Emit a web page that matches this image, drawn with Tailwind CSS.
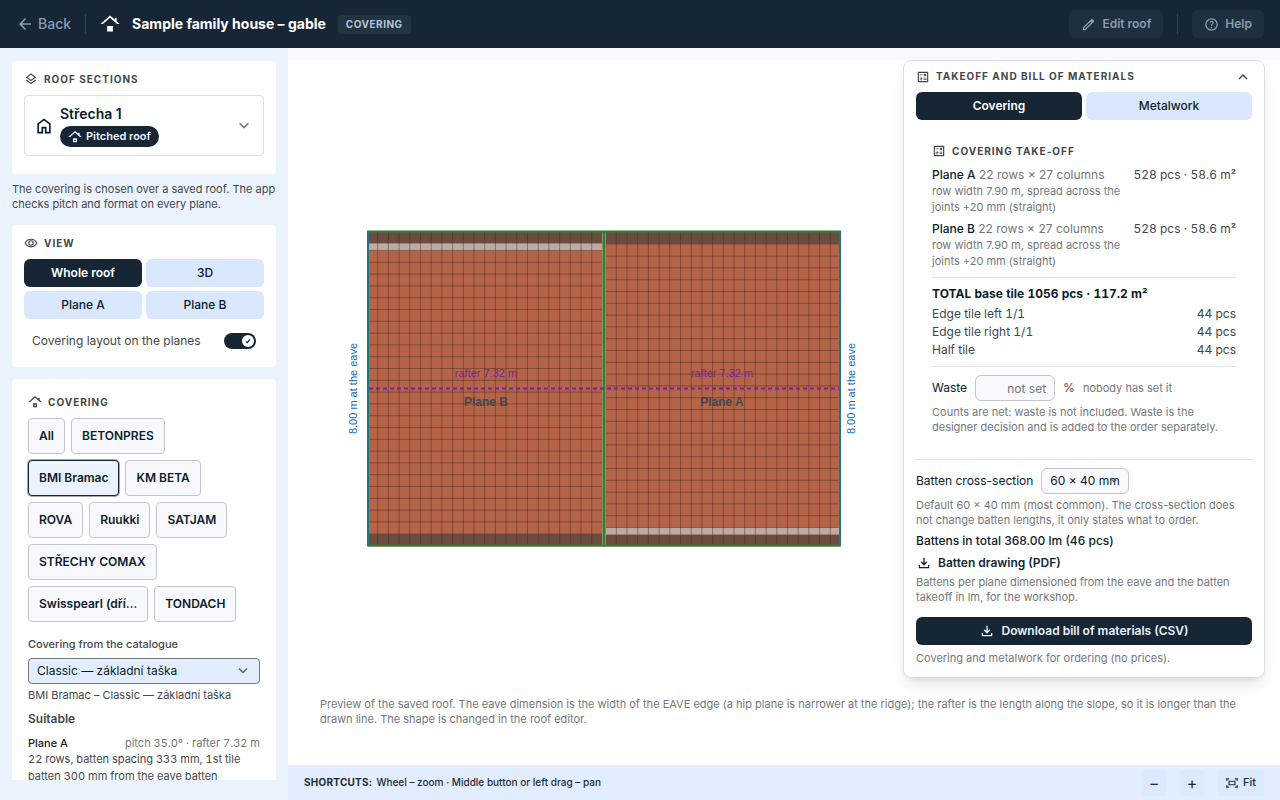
<!DOCTYPE html>
<html lang="en">
<head>
    <meta charset="UTF-8">
    <meta name="viewport" content="width=device-width, initial-scale=1.0">
    <title>Sample family house – gable</title>
    <script src="https://cdn.jsdelivr.net/npm/@tailwindcss/browser@4"></script>
</head>
<body class="h-screen flex flex-col overflow-hidden bg-[#f8f9ff] font-['Inter',sans-serif] text-xs text-[#43474c]">

    <!-- icon set -->
    <svg class="hidden">
        <symbol id="i-back" viewBox="0 -960 960 960"><path d="m313-440 224 224-57 56-320-320 320-320 57 56-224 224h487v80H313Z"/></symbol>
        <symbol id="i-roof" viewBox="1.500 1.500 21 21"><path d="M9 14h6v6H9zM19 9V5.500h-2v1.800L12 3 2 12h2.600L12 5.500 19.400 12H22z"/></symbol>
        <symbol id="i-roof-line" viewBox="1.500 1.500 21 21"><path d="M13 18h-2v-2h2zM15 14H9v6h6zM19 9V5.500h-2v1.800L12 3 2 12h2.600L12 5.500 19.400 12H22z"/></symbol>
        <symbol id="i-home" viewBox="0 -960 960 960"><path d="M240-200h120v-240h240v240h120v-360L480-740 240-560v360Zm-80 80v-480l320-240 320 240v480H520v-240h-80v240H160Z"/></symbol>
        <symbol id="i-down" viewBox="0 -960 960 960"><path d="M480-344 240-584l56-56 184 184 184-184 56 56-240 240Z"/></symbol>
        <symbol id="i-up" viewBox="0 -960 960 960"><path d="M480-528 296-344l-56-56 240-240 240 240-56 56-184-184Z"/></symbol>
        <symbol id="i-layers" viewBox="0 -960 960 960"><path d="M480-118 120-398l66-50 294 228 294-228 66 50-360 280Zm0-202L120-600l360-280 360 280-360 280Zm0-102 230-178-230-178-230 178 230 178Z"/></symbol>
        <symbol id="i-eye" viewBox="0 0 24 24"><path fill="none" stroke="currentColor" stroke-width="2" d="M2 12c2-4 5.500-6.500 10-6.500S20 8 22 12c-2 4-5.500 6.500-10 6.500S4 16 2 12z"/><circle cx="12" cy="12" r="3.800" fill="none" stroke="currentColor" stroke-width="2"/></symbol>
        <symbol id="i-calc" viewBox="0 0 24 24"><path fill="none" stroke="currentColor" stroke-width="2" d="M4 4h16v16H4z"/><path d="M6.300 7.700h5v1.500h-5zM13 15.700h5v1.500h-5zM13 13.200h5v1.500h-5zM8 18h1.500v-2h2v-1.500h-2v-2H8v2H6V16h2zM14.100 11l1.400-1.400 1.400 1.400 1.100-1.100-1.400-1.400L18 7.100 16.900 6l-1.400 1.400L14.100 6 13 7.100l1.400 1.400L13 9.900z"/></symbol>
        <symbol id="i-edit" viewBox="0 -960 960 960"><path d="M200-200h57l391-391-57-57-391 391v57Zm-80 80v-170l528-527q12-11 26.500-17t30.500-6q16 0 31 6t26 18l55 56q12 11 17.500 26t5.500 30q0 16-5.500 30.500T817-647L290-120H120Zm640-584-56-56 56 56Zm-141 85-28-29 57 57-29-28Z"/></symbol>
        <symbol id="i-help" viewBox="0 -960 960 960"><path d="M478-240q21 0 35.500-14.500T528-290q0-21-14.500-35.500T478-340q-21 0-35.500 14.500T428-290q0 21 14.500 35.500T478-240Zm-36-154h74q0-33 7.500-52t42.500-52q26-26 41-49.500t15-56.500q0-56-41-86t-97-30q-57 0-92.500 30T342-618l66 26q5-18 22.500-39t53.500-21q32 0 48 17.500t16 38.500q0 20-12 37.500T506-526q-44 39-54 59t-10 73Zm38 314q-83 0-156-31.500T197-197q-54-54-85.500-127T80-480q0-83 31.500-156T197-763q54-54 127-85.500T480-880q83 0 156 31.500T763-763q54 54 85.500 127T880-480q0 83-31.500 156T763-197q-54 54-127 85.500T480-80Zm0-80q134 0 227-93t93-227q0-134-93-227t-227-93q-134 0-227 93t-93 227q0 134 93 227t227 93Z"/></symbol>
        <symbol id="i-download" viewBox="0 -960 960 960"><path d="M480-320 280-520l56-58 104 104v-326h80v326l104-104 56 58-200 200ZM240-160q-33 0-56.500-23.500T160-240v-120h80v120h480v-120h80v120q0 33-23.500 56.500T720-160H240Z"/></symbol>
        <symbol id="i-fit" viewBox="0 0 24 24"><path fill="none" stroke="currentColor" stroke-width="2" d="M3 8V5h4M17 5h4v3M21 16v3h-4M7 19H3v-3M7 9h10v6H7z"/></symbol>
    </svg>

    <header class="h-12 shrink-0 flex items-center px-4 bg-[#162635] text-[#8a9caf]">
        <a href="#" class="flex items-center gap-1 text-sm font-medium"><svg class="size-[18px] fill-current"><use href="#i-back"/></svg>Back</a>
        <span class="w-px h-5 ml-3.5 bg-[#34424f]"></span>
        <svg class="size-5 ml-3.5 fill-white"><use href="#i-roof"/></svg>
        <h1 class="ml-3 text-sm font-bold text-white">Sample family house – gable</h1>
        <span class="ml-3 px-2 py-0.5 rounded-sm bg-[#233342] text-[10px] leading-[15px] font-bold tracking-wider text-[#b4c3d3]">COVERING</span>
        <div class="ml-auto flex items-center">
            <button class="h-7 px-3 flex items-center gap-1.5 rounded-md bg-[#1e2f3f] font-semibold"><svg class="size-[15px] fill-current"><use href="#i-edit"/></svg>Edit roof</button>
            <span class="w-px h-5 mx-3.5 bg-[#34424f]"></span>
            <button class="h-7 px-3 flex items-center gap-1.5 rounded-md bg-[#1e2f3f] font-semibold"><svg class="size-[15px] fill-current"><use href="#i-help"/></svg>Help</button>
        </div>
    </header>

    <div class="flex-1 min-h-0 flex">
        <aside class="w-72 shrink-0 bg-[#ebf3ff] px-3 pt-[13px] pb-5">
            <div class="h-full overflow-y-auto [scrollbar-width:none] flex flex-col gap-3">
                <section class="shrink-0 rounded bg-white px-3 pt-2.5 pb-[18px]">
                    <h2 class="flex items-center gap-1.5 text-[10px] leading-4 font-bold tracking-widest"><svg class="size-3.5 fill-current"><use href="#i-layers"/></svg>ROOF SECTIONS</h2>
                    <button class="mt-2 w-full h-[61px] flex items-center gap-1.5 px-[9px] rounded border border-[#dcdfe3] text-left text-[#0b1d2d]">
                        <svg class="size-5 fill-current"><use href="#i-home"/></svg>
                        <span class="flex flex-col items-start gap-0.5">
                            <span class="text-sm font-semibold leading-5">Střecha 1</span>
                            <span class="h-[21px] flex items-center gap-1 px-2 rounded-full bg-[#162635] text-[11px] font-semibold text-[#eaf1ff]"><svg class="size-3.5 fill-current"><use href="#i-roof-line"/></svg>Pitched roof</span>
                        </span>
                        <svg class="size-5 ml-auto fill-[#74777c]"><use href="#i-down"/></svg>
                    </button>
                </section>

                <p class="shrink-0 -my-1 pb-[5px] text-[11px] leading-[15px]">The covering is chosen over a saved roof. The app checks pitch and format on every plane.</p>

                <section class="shrink-0 rounded bg-white px-3 pt-2.5 pb-3.5">
                    <h2 class="flex items-center gap-1.5 text-[10px] leading-4 font-bold tracking-widest"><svg class="size-3.5"><use href="#i-eye"/></svg>VIEW</h2>
                    <div class="mt-2 grid grid-cols-2 gap-1 font-medium text-[#0b1d2d]">
                        <button class="h-7 rounded-md bg-[#162635] font-semibold text-white">Whole roof</button>
                        <button class="h-7 rounded-md bg-[#d9e8ff]">3D</button>
                        <button class="h-7 rounded-md bg-[#d9e8ff]">Plane A</button>
                        <button class="h-7 rounded-md bg-[#d9e8ff]">Plane B</button>
                    </div>
                    <label class="mt-2.5 px-2 py-0.5 flex items-center justify-between leading-5">
                        Covering layout on the planes
                        <span class="relative w-8 h-4 flex">
                            <input type="checkbox" checked class="appearance-none w-8 h-4 rounded-full bg-[#162635]">
                            <span class="absolute right-0.5 top-0.5 size-3 rounded-full bg-white flex items-center justify-center">
                                <svg class="size-2 fill-none stroke-[#162635]" viewBox="0 0 8 8"><path stroke-width="1.200" d="M2 4.500l1.300 1.200L6 2.300"/></svg>
                            </span>
                        </span>
                    </label>
                </section>

                <section class="shrink-0 rounded bg-white px-4 pt-[15px] pb-4">
                    <h2 class="flex items-center gap-1.5 text-[10px] leading-4 font-bold tracking-widest"><svg class="size-3.5 fill-current"><use href="#i-roof-line"/></svg>COVERING</h2>
                    <div class="mt-2 flex flex-wrap gap-1.5 font-semibold text-[#0b1d2d]">
                        <button class="h-9 px-2.5 rounded border border-[#c4c6cc] bg-[#f8f9ff]">All</button>
                        <button class="h-9 px-2.5 rounded border border-[#c4c6cc] bg-[#f8f9ff]">BETONPRES</button>
                        <button class="h-9 px-2.5 rounded border border-[#162635] ring-1 ring-[#162635]/40 bg-[#ebf3ff]">BMI Bramac</button>
                        <button class="h-9 px-2.5 rounded border border-[#c4c6cc] bg-[#f8f9ff]">KM BETA</button>
                        <button class="h-9 px-2.5 rounded border border-[#c4c6cc] bg-[#f8f9ff]">ROVA</button>
                        <button class="h-9 px-2.5 rounded border border-[#c4c6cc] bg-[#f8f9ff]">Ruukki</button>
                        <button class="h-9 px-2.5 rounded border border-[#c4c6cc] bg-[#f8f9ff]">SATJAM</button>
                        <button class="h-9 px-2.5 rounded border border-[#c4c6cc] bg-[#f8f9ff]">STŘECHY COMAX</button>
                        <button class="h-9 px-2.5 rounded border border-[#c4c6cc] bg-[#f8f9ff]">Swisspearl (dří…</button>
                        <button class="h-9 px-2.5 rounded border border-[#c4c6cc] bg-[#f8f9ff]">TONDACH</button>
                    </div>
                    <label for="catalogue" class="block mt-3.5 text-[11px] leading-4 font-medium">Covering from the catalogue</label>
                    <div class="relative mt-1.5">
                        <select id="catalogue" class="appearance-none block w-full h-[26px] px-2 rounded border border-[#74777c] bg-[#e2eeff] text-[#0b1d2d]"><option>Classic — základní taška</option></select>
                        <svg class="absolute right-2 top-1 size-[18px] fill-[#5b5f64] pointer-events-none"><use href="#i-down"/></svg>
                    </div>
                    <p class="mt-1 text-[11px] leading-[15px]">BMI Bramac – Classic — základní taška</p>
                    <p class="mt-2 leading-4 font-semibold">Suitable</p>
                    <div class="mt-2 flex justify-between text-[11px] leading-4 tabular-nums"><span class="font-medium text-[#0b1d2d]">Plane A</span><span class="text-[#74777c]">pitch 35.0° · rafter 7.32 m</span></div>
                    <p class="text-[11px] leading-[17px] tabular-nums">22 rows, batten spacing 333 mm, 1st tile batten 300 mm from the eave batten</p>
                </section>
            </div>
        </aside>

        <main class="relative flex-1 min-w-0 flex flex-col pt-3">
            <div class="flex-1 min-h-0 flex flex-col bg-white pt-5 px-8 pb-[38px]">
                <div class="flex-1 min-h-0 pr-90">
                    <svg id="roof" class="w-full h-full font-['Liberation_Sans',sans-serif]" viewBox="0 0 568 616">
                        <rect x="48" y="151" width="472" height="315" fill="#b5644a"/>
                        <g fill="#6c4b40">
                            <rect x="48" y="151" width="236" height="12"/>
                            <rect x="284" y="151" width="236" height="13"/>
                            <rect x="48" y="453" width="236" height="12"/>
                            <rect x="284" y="454" width="236" height="11"/>
                        </g>
                        <rect x="48" y="163" width="236" height="7" fill="#bfaaa3"/>
                        <rect x="284" y="447" width="236" height="7" fill="#bfaaa3"/>
                        <path id="tiles" fill="none" stroke="#3c2814" stroke-opacity=".42" stroke-width="1"/>
                        <path d="M284 151v315" stroke="#8a9a63" stroke-width="4"/>
                        <path d="M284 151v315M48 150v316M520 150v316M47 151h474M47 465h474" stroke="#2e7d32" stroke-width="2"/>
                        <path d="M48 152v313M520 152v313" stroke="#1f6fd0" stroke-width="1.500" stroke-dasharray="3 2"/>
                        <path d="M49 308h470" stroke="#7b1fa2" stroke-width="2" stroke-dasharray="4 3"/>
                        <g font-size="11" fill="#7b1fa2" text-anchor="middle">
                            <text x="166" y="296">rafter 7.32 m</text>
                            <text x="402" y="296">rafter 7.32 m</text>
                        </g>
                        <g font-size="12" font-weight="bold" fill="#43474c" text-anchor="middle">
                            <text x="166" y="325">Plane B</text>
                            <text x="402" y="325">Plane A</text>
                        </g>
                        <g font-size="11" fill="#1565c0" text-anchor="middle">
                            <text transform="translate(37 308) rotate(-90)">8.00 m at the eave</text>
                            <text transform="translate(535 308) rotate(-90)">8.00 m at the eave</text>
                        </g>
                    </svg>
                </div>
                <p class="text-[11px] leading-[15px] text-[#74777c]">Preview of the saved roof. The eave dimension is the width of the EAVE edge (a hip plane is narrower at the ridge); the rafter is the length along the slope, so it is longer than the drawn line. The shape is changed in the roof editor.</p>
            </div>

            <footer class="h-[35px] shrink-0 flex items-center px-4 bg-[#e2eeff] text-[11px] text-[#1b2c3b]">
                <p class="flex gap-1 text-[10px] font-medium"><b class="font-bold tracking-wide">SHORTCUTS:</b> Wheel – zoom · Middle button or left drag – pan</p>
                <div class="ml-auto flex gap-3 font-medium">
                    <button class="size-[26px] bg-[#d9e8ff]/70 rounded-sm text-base leading-none font-normal" aria-label="Zoom out">−</button>
                    <button class="size-[26px] bg-[#d9e8ff]/70 rounded-sm text-base leading-none font-normal" aria-label="Zoom in">+</button>
                    <button class="h-[26px] px-2 bg-[#d9e8ff]/70 rounded-sm flex items-center gap-1"><svg class="size-3.5"><use href="#i-fit"/></svg>Fit</button>
                </div>
            </footer>

            <!-- takeoff panel floats over the canvas -->
            <section class="absolute top-3 right-[15px] w-[362px] rounded-lg border border-[#dcdfe3] bg-white px-3 pb-[11px] shadow-lg">
                <h2 class="h-[31px] flex items-center gap-1.5 text-[10px] font-bold tracking-widest"><svg class="size-3.5 fill-current"><use href="#i-calc"/></svg>TAKEOFF AND BILL OF MATERIALS<button class="ml-auto" aria-label="Collapse"><svg class="size-[18px] fill-current"><use href="#i-up"/></svg></button></h2>
                <div class="grid grid-cols-2 gap-1 font-medium text-[#0b1d2d]">
                    <button class="h-7 rounded-md bg-[#162635] font-semibold text-white">Covering</button>
                    <button class="h-7 rounded-md bg-[#d9e8ff]">Metalwork</button>
                </div>

                <div class="px-4 pt-[23px] pb-6">
                    <h3 class="flex items-center gap-1.5 text-[10px] leading-4 font-bold tracking-widest"><svg class="size-3.5 fill-current"><use href="#i-calc"/></svg>COVERING TAKE-OFF</h3>
                    <ul class="mt-[7px] flex flex-col gap-[5px]">
                        <li class="flex justify-between">
                            <div class="w-[194px] text-[#74777c]"><p class="leading-[17px]"><span class="font-medium text-[#0b1d2d]">Plane A</span> 22 rows × 27 columns</p><p class="text-[11px] leading-4">row width 7.90 m, spread across the joints +20 mm (straight)</p></div>
                            <span class="leading-[17px] tabular-nums">528 pcs · 58.6 m²</span>
                        </li>
                        <li class="flex justify-between">
                            <div class="w-[194px] text-[#74777c]"><p class="leading-[17px]"><span class="font-medium text-[#0b1d2d]">Plane B</span> 22 rows × 27 columns</p><p class="text-[11px] leading-4">row width 7.90 m, spread across the joints +20 mm (straight)</p></div>
                            <span class="leading-[17px] tabular-nums">528 pcs · 58.6 m²</span>
                        </li>
                    </ul>
                    <div class="mt-2 border-y border-[#e3e5e8] py-[7px] leading-[18px] tabular-nums">
                        <p class="mb-0.5 font-bold text-[#0b1d2d]">TOTAL base tile 1056 pcs · 117.2 m²</p>
                        <p class="flex justify-between"><span>Edge tile left 1/1</span><span>44 pcs</span></p>
                        <p class="flex justify-between"><span>Edge tile right 1/1</span><span>44 pcs</span></p>
                        <p class="flex justify-between"><span>Half tile</span><span>44 pcs</span></p>
                    </div>
                    <div class="mt-2 flex items-center gap-2">
                        <label for="waste" class="text-[#0b1d2d]">Waste</label>
                        <input id="waste" type="text" placeholder="not set" class="w-20 h-[26px] px-2 rounded-md border border-[#c4c6cc] bg-[#f8f9ff] text-right placeholder:text-[#74777c]">
                        <span>%</span>
                        <span class="text-[11px] text-[#74777c]">nobody has set it</span>
                    </div>
                    <p class="mt-1 text-[11px] leading-[15px] text-[#74777c]">Counts are net: waste is not included. Waste is the designer decision and is added to the order separately.</p>
                </div>

                <div class="border-t border-[#e3e5e8] pt-2">
                    <div class="flex items-center gap-2">
                        <label for="batten" class="text-[#0b1d2d]">Batten cross-section</label>
                        <div class="relative">
                            <select id="batten" class="appearance-none block w-[88px] h-[26px] px-2 rounded-md border border-[#c4c6cc] bg-[#f8f9ff] text-[#0b1d2d]"><option>60 × 40 mm</option></select>
                            <svg class="absolute right-2.5 top-2 size-2.5 fill-[#43474c] pointer-events-none"><use href="#i-down"/></svg>
                        </div>
                    </div>
                    <p class="mt-1 text-[11px] leading-[15px] text-[#74777c]">Default 60 × 40 mm (most common). The cross-section does not change batten lengths, it only states what to order.</p>
                    <p class="mt-1 leading-[18px] font-medium text-[#0b1d2d]">Battens in total 368.00 lm (46 pcs)</p>
                    <a href="#" class="mt-1 flex items-center gap-1.5 leading-[18px] font-semibold text-[#162635]"><svg class="size-4 fill-current"><use href="#i-download"/></svg>Batten drawing (PDF)</a>
                    <p class="mt-[3px] text-[11px] leading-[15px] text-[#74777c]">Battens per plane dimensioned from the eave and the batten takeoff in lm, for the workshop.</p>
                    <button class="mt-3 w-full h-7 flex items-center justify-center gap-1.5 rounded-md bg-[#162635] font-semibold text-[#eaf1ff]"><svg class="size-4 fill-current"><use href="#i-download"/></svg>Download bill of materials (CSV)</button>
                    <p class="mt-1.5 text-[11px] leading-[15px] text-[#74777c]">Covering and metalwork for ordering (no prices).</p>
                </div>
            </section>
        </main>
    </div>

    <script>
        // 22 batten rows run across each plane, columns are stacked along the eave
        const rowStep = 10.7;
        const colStep = 11.8;
        let d = '';
        for (let i = 0; i < 22; i++) {
            d += `M${57.7 + i * rowStep} 152V465`;
            d += `M${510.3 - i * rowStep} 152V465`;
        }
        for (let i = 0; i < 24; i++) {
            d += `M48 ${170 + i * colStep}H284`;
            d += `M284 ${447 - i * colStep}H520`;
        }
        document.getElementById('tiles').setAttribute('d', d);
    </script>
</body>
</html>
